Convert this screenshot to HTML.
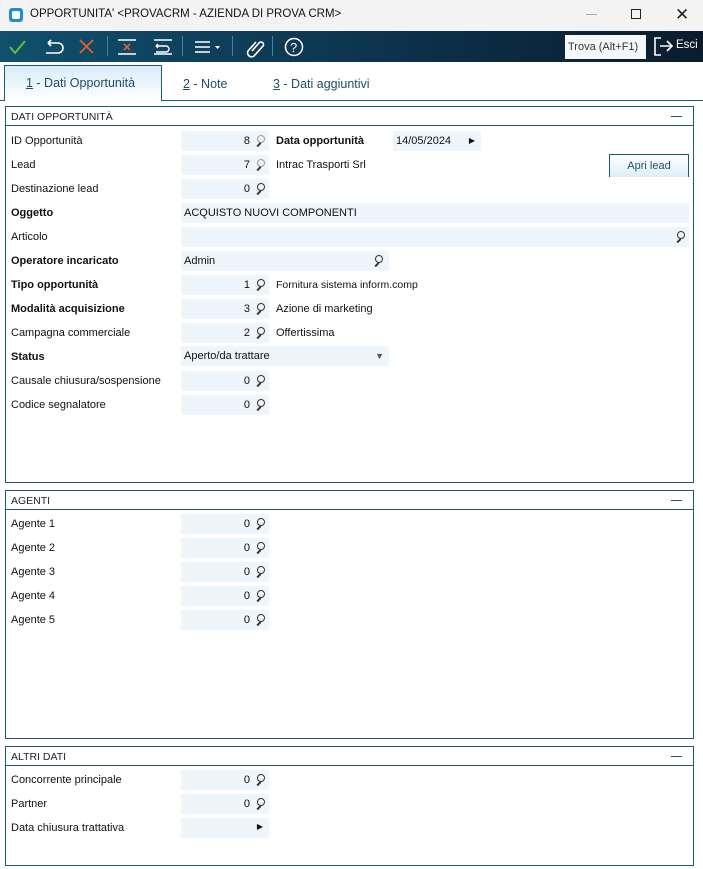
<!DOCTYPE html>
<html><head><meta charset="utf-8"><style>
*{margin:0;padding:0;box-sizing:border-box}
body{width:703px;height:869px;background:#fff;font-family:"Liberation Sans",sans-serif;font-size:11px;color:#111;position:relative;overflow:hidden}
.a{position:absolute}
.title{left:0;top:0;width:703px;height:31px;background:#f3f3f3}
.tb{left:0;top:31px;width:703px;height:31px;background:linear-gradient(90deg,#10506c,#0d3550 50%,#0a1c2c)}
.sep{width:1px;height:20px;top:36px;background:#4f7f96}
.panel{border:1px solid #1d5a78;left:5px;width:689px}
.ph{position:absolute;left:0;top:0;right:0;height:19px;border-bottom:1px solid #1d5a78;font-size:10.5px;padding:4px 0 0 5px;color:#222}
.ph:after{content:"";position:absolute;right:11px;top:9px;width:11px;height:1px;background:#1d5a78}
.l{left:11px;font-size:11px}
.b{font-weight:bold}
.f{background:#eef5fb;height:20px}
.n{text-align:right;padding-right:19px;line-height:20px;width:88px;left:181px}
.mag{position:absolute;width:8px;height:8px;border:1.3px solid #333;border-radius:50%;right:4px;top:4px}
.mag:after{content:"";position:absolute;width:1.5px;height:5px;background:#333;left:0px;top:6px;transform:rotate(45deg)}
.t{line-height:20px;padding-left:3px}
</style></head><body>
<div class="a title"></div>
<div class="a" style="left:9px;top:8px;width:14px;height:14px;border-radius:3px;background:#1e90d0"></div>
<div class="a" style="left:12px;top:11px;width:8px;height:8px;border-radius:2px;background:#fff"></div>
<div class="a" style="left:30px;top:8px;font-size:11.5px">OPPORTUNITA' &lt;PROVACRM - AZIENDA DI PROVA CRM&gt;</div>
<div class="a" style="left:586px;top:14px;width:11px;height:1px;background:#aaa"></div>
<div class="a" style="left:631px;top:9px;width:10px;height:10px;border:1.3px solid #222"></div>
<div class="a" style="left:675px;top:5px;font-size:17px;color:#222">✕</div>
<div class="a tb"></div>
<svg class="a" style="left:0;top:31px" width="310" height="31">
<path d="M10 16l5 6 10-12" stroke="#5cc23c" stroke-width="2" fill="none"/>
<path d="M48 12h10a5 5 0 010 10h-12M48 12l3-3M48 12l3 3" stroke="#fff" stroke-width="1.6" fill="none"/>
<path d="M80 9l13 13M93 9L80 22" stroke="#e06030" stroke-width="1.8"/>
<path d="M118 9h18M118 23h18" stroke="#fff" stroke-width="1.4"/><path d="M124 13l6 6M130 13l-6 6" stroke="#e06030" stroke-width="1.6"/>
<path d="M154 9h18M154 23h18M156 15h10a3 3 0 010 6h-10M156 15l2-2M156 15l2 2" stroke="#fff" stroke-width="1.4" fill="none"/>
<path d="M195 11h15M195 16h15M195 21h15" stroke="#fff" stroke-width="1.6"/><path d="M215 15h5l-2.5 3z" fill="#fff"/>
<path d="M252 20l7-8a2.5 2.5 0 014 3l-9 10a4 4 0 01-6-5l8-9" stroke="#fff" stroke-width="1.6" fill="none"/>
<circle cx="294" cy="16" r="8.5" stroke="#fff" stroke-width="1.5" fill="none"/>
<text x="290" y="21" fill="#fff" font-size="13" font-family="Liberation Sans">?</text>
</svg>
<div class="a sep" style="left:107px"></div><div class="a sep" style="left:182px"></div><div class="a sep" style="left:232px"></div><div class="a sep" style="left:272px"></div>
<div class="a" style="left:565px;top:35px;width:81px;height:24px;background:#f4f8fb;color:#333;line-height:24px;padding-left:3px;font-size:11px">Trova (Alt+F1)</div>
<svg class="a" style="left:653px;top:36px" width="22" height="22"><path d="M8 2H2v17h6M7 10h12M14 5l5 5-5 5" stroke="#fff" stroke-width="1.6" fill="none"/></svg>
<div class="a" style="left:676px;top:39px;color:#fff;font-size:11.5px">Esci</div>
<div class="a" style="left:0;top:100px;width:703px;height:1px;background:#1d5a78"></div>
<div class="a" style="left:4px;top:65px;width:158px;height:36px;border:1px solid #1d5a78;border-bottom:none;background:linear-gradient(#d9ecf8,#fff);"></div>
<div class="a" style="left:26px;top:76px;color:#1d4e6a;font-size:12.5px"><u>1</u> - Dati Opportunità</div>
<div class="a" style="left:183px;top:77px;color:#1d4e6a;font-size:12.5px"><u>2</u> - Note</div>
<div class="a" style="left:273px;top:77px;color:#1d4e6a;font-size:12.5px"><u>3</u> - Dati aggiuntivi</div>
<div class="a panel" style="top:106px;height:377px"><div class="ph">DATI OPPORTUNITÀ</div></div>
<div class="a l" style="top:135px">ID Opportunità</div>
<div class="a f n" style="top:131px">8<span class="mag" style="border-color:#999"></span></div>
<div class="a b" style="left:276px;top:135px">Data opportunità</div>
<div class="a f t" style="left:393px;top:131px;width:88px">14/05/2024<span style="position:absolute;right:6px;top:0;font-size:8px">▶</span></div>
<div class="a l" style="top:159px">Lead</div>
<div class="a f n" style="top:155px">7<span class="mag" style="border-color:#999"></span></div>
<div class="a" style="left:276px;top:159px">Intrac Trasporti Srl</div>
<div class="a" style="left:609px;top:154px;width:80px;height:23px;border:1px solid #1d5a78;border-bottom:none;background:linear-gradient(#fff,#dcedf8);color:#1d4e6a;text-align:center;line-height:22px">Apri lead</div>
<div class="a l" style="top:183px">Destinazione lead</div>
<div class="a f n" style="top:179px">0<span class="mag"></span></div>
<div class="a l b" style="top:207px">Oggetto</div>
<div class="a f t" style="left:181px;top:203px;width:508px">ACQUISTO NUOVI COMPONENTI</div>
<div class="a l" style="top:231px">Articolo</div>
<div class="a f" style="left:181px;top:227px;width:508px"><span class="mag"></span></div>
<div class="a l b" style="top:255px">Operatore incaricato</div>
<div class="a f t" style="left:181px;top:251px;width:208px">Admin<span class="mag" style="right:6px"></span></div>
<div class="a l b" style="top:279px">Tipo opportunità</div>
<div class="a f n" style="top:275px">1<span class="mag"></span></div>
<div class="a" style="left:276px;top:279px;font-size:10.5px">Fornitura sistema inform.comp</div>
<div class="a l b" style="top:303px">Modalità acquisizione</div>
<div class="a f n" style="top:299px">3<span class="mag"></span></div>
<div class="a" style="left:276px;top:303px">Azione di marketing</div>
<div class="a l" style="top:327px">Campagna commerciale</div>
<div class="a f n" style="top:323px">2<span class="mag"></span></div>
<div class="a" style="left:276px;top:327px">Offertissima</div>
<div class="a l b" style="top:351px">Status</div>
<div class="a f t" style="left:181px;top:346px;width:208px">Aperto/da trattare<span style="position:absolute;right:5px;top:0;font-size:9px;color:#555">▼</span></div>
<div class="a l" style="top:375px">Causale chiusura/sospensione</div>
<div class="a f n" style="top:371px">0<span class="mag"></span></div>
<div class="a l" style="top:399px">Codice segnalatore</div>
<div class="a f n" style="top:395px">0<span class="mag"></span></div>
<div class="a panel" style="top:490px;height:249px"><div class="ph">AGENTI</div></div>
<div class="a l" style="top:518px">Agente 1</div><div class="a f n" style="top:514px">0<span class="mag"></span></div>
<div class="a l" style="top:542px">Agente 2</div><div class="a f n" style="top:538px">0<span class="mag"></span></div>
<div class="a l" style="top:566px">Agente 3</div><div class="a f n" style="top:562px">0<span class="mag"></span></div>
<div class="a l" style="top:590px">Agente 4</div><div class="a f n" style="top:586px">0<span class="mag"></span></div>
<div class="a l" style="top:614px">Agente 5</div><div class="a f n" style="top:610px">0<span class="mag"></span></div>
<div class="a panel" style="top:746px;height:120px"><div class="ph">ALTRI DATI</div></div>
<div class="a l" style="top:774px">Concorrente principale</div><div class="a f n" style="top:770px">0<span class="mag"></span></div>
<div class="a l" style="top:798px">Partner</div><div class="a f n" style="top:794px">0<span class="mag"></span></div>
<div class="a l" style="top:822px">Data chiusura trattativa</div>
<div class="a f" style="left:181px;top:818px;width:88px"><span style="position:absolute;right:6px;top:4px;font-size:8px">▶</span></div>
</body></html>
